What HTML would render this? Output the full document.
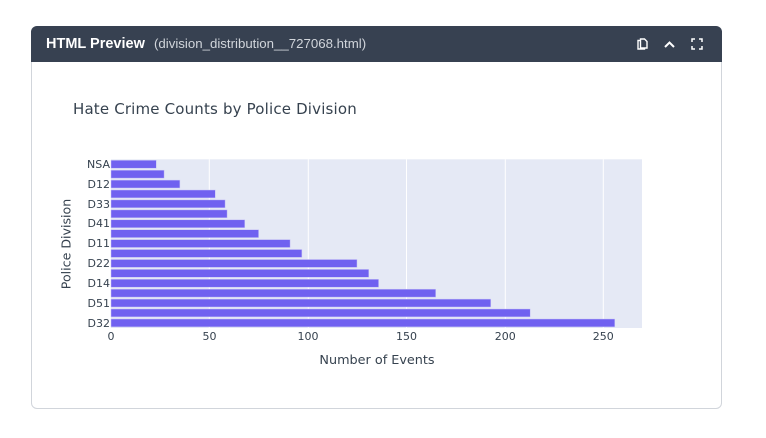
<!DOCTYPE html>
<html><head><meta charset="utf-8">
<style>
html,body{margin:0;padding:0;background:#fff;width:766px;height:438px;overflow:hidden}
.card{position:absolute;left:31px;top:26px;width:689px;height:381px;border:1px solid #d1d5db;border-radius:6px;background:#fff}
.hd{position:absolute;left:31px;top:26px;width:691px;height:36px;background:#374151;color:#fff;font-family:"Liberation Sans",sans-serif;border-radius:6px 6px 0 0}
.t1{position:absolute;left:15px;top:10px;font-size:14.5px;font-weight:bold;line-height:16px;white-space:nowrap}
.t2{position:absolute;left:123px;top:10px;font-size:13.25px;line-height:15px;color:#d1d5db;white-space:nowrap}
svg.p{position:absolute;left:0;top:0}
svg text{font-family:"DejaVu Sans",sans-serif}
</style></head><body>
<div class="card"></div><div class="hd"><span class="t1">HTML Preview</span><span class="t2">(division_distribution__727068.html)</span></div>
<svg class="p" width="766" height="438" viewBox="0 0 766 438">
<g fill="none" stroke="#fff" stroke-width="1.4">
<path d="M640.5 39h4l2.5 2.5v6.5h-6.500z"/><path d="M640.500 40.500h-2.500v8.500h6.500v-1"/>
</g>
<path d="M665 47l4.500-4.500 4.500 4.500" fill="none" stroke="#fff" stroke-width="2"/>
<path d="M692 42v-3h3M699 39h3v3M702 46v3h-3M695 49h-3v-3" fill="none" stroke="#fff" stroke-width="1.500"/>
<rect x="111" y="159.300" width="531" height="168.700" fill="#e5e9f5"/>
<g stroke="#fff" stroke-width="1"><path d="M209.300 159.300V328M308.300 159.300V328M406.500 159.300V328M505.300 159.300V328M603.300 159.300V328"/></g>
<g stroke="#c9c6f5" stroke-width="0.500" fill="#7061f0">
<rect x="111" y="160.300" width="45.300" height="7.900"/>
<rect x="111" y="170.200" width="53.100" height="7.900"/>
<rect x="111" y="180.100" width="68.900" height="7.900"/>
<rect x="111" y="190" width="104.300" height="7.900"/>
<rect x="111" y="199.900" width="114.100" height="7.900"/>
<rect x="111" y="209.900" width="116.100" height="7.900"/>
<rect x="111" y="219.800" width="133.800" height="7.900"/>
<rect x="111" y="229.700" width="147.600" height="7.900"/>
<rect x="111" y="239.600" width="179.100" height="7.900"/>
<rect x="111" y="249.500" width="190.900" height="7.900"/>
<rect x="111" y="259.500" width="246" height="7.900"/>
<rect x="111" y="269.400" width="257.800" height="7.900"/>
<rect x="111" y="279.300" width="267.600" height="7.900"/>
<rect x="111" y="289.200" width="324.700" height="7.900"/>
<rect x="111" y="299.100" width="379.800" height="7.900"/>
<rect x="111" y="309" width="419.200" height="7.900"/>
<rect x="111" y="319" width="503.800" height="7.900"/>
</g>
<text x="73" y="114" font-size="15" fill="#36424f" letter-spacing=".17">Hate Crime Counts by Police Division</text>
<g font-size="11" fill="#36424f" text-anchor="end">
<text x="110" y="168">NSA</text><text x="110" y="188">D12</text><text x="110" y="208">D33</text><text x="110" y="227">D41</text><text x="110" y="247">D11</text><text x="110" y="267">D22</text><text x="110" y="287">D14</text><text x="110" y="307">D51</text><text x="110" y="327">D32</text>
</g>
<g font-size="11" fill="#36424f" text-anchor="middle">
<text x="111" y="340">0</text><text x="209.500" y="340">50</text><text x="308" y="340">100</text><text x="406.500" y="340">150</text><text x="505.300" y="340">200</text><text x="603.300" y="340">250</text>
</g>
<text x="377" y="364" font-size="12.800" fill="#36424f" text-anchor="middle">Number of Events</text>
<text transform="translate(70.500 244) rotate(-90)" font-size="12.600" fill="#36424f" text-anchor="middle">Police Division</text>
</svg>
</body></html>
